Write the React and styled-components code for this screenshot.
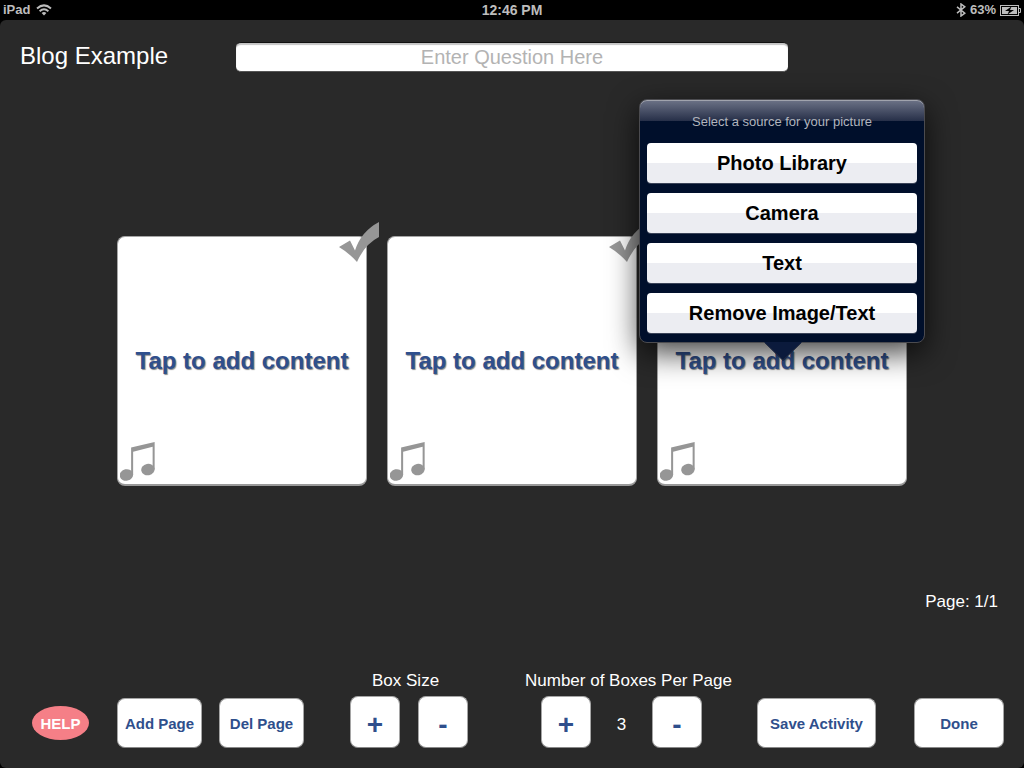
import { useState } from "react";
import styled, { createGlobalStyle } from "styled-components";

const SOURCES = ["Photo Library", "Camera", "Text", "Remove Image/Text"];

export default function App() {
  const [question, setQuestion] = useState("");
  const [count, setCount] = useState(3);
  const [size, setSize] = useState(250);

  const boxes = Array.from({ length: count }, (_, i) => i);

  return (
    <>
      <GlobalStyle />
      <Page>
        <StatusBar>
          <StatusGroup>
            <span>iPad</span>
            <WifiIcon />
          </StatusGroup>
          <Clock>12:46 PM</Clock>
          <StatusGroup $end>
            <BluetoothIcon />
            <span>63%</span>
            <BatteryIcon />
          </StatusGroup>
        </StatusBar>

        <Screen>
          <Header>
            <Title>Blog Example</Title>
            <Question
              aria-label="Question"
              placeholder="Enter Question Here"
              value={question}
              onChange={(e) => setQuestion(e.target.value)}
            />
          </Header>

          <Boxes>
            {boxes.map((i) => (
              <Box key={i} $size={size}>
                <BoxButton type="button">Tap to add content</BoxButton>
                <CheckIcon />
                <NoteIcon />
                {i === 2 && <SourcePopover />}
              </Box>
            ))}
          </Boxes>

          <PageNumber>Page: 1/1</PageNumber>

          <Footer>
            <Actions $gap={17}>
              <HelpButton type="button">HELP</HelpButton>
              <ActionButton type="button" $width={85}>
                Add Page
              </ActionButton>
              <ActionButton type="button" $width={85}>
                Del Page
              </ActionButton>
            </Actions>

            <Stepper>
              <StepperLabel $inset={22}>Box Size</StepperLabel>
              <StepperRow $width={118}>
                <StepButton type="button" onClick={() => setSize(size + 10)}>
                  +
                </StepButton>
                <StepButton type="button" onClick={() => setSize(size - 10)}>
                  -
                </StepButton>
              </StepperRow>
            </Stepper>

            <Stepper>
              <StepperLabel>Number of Boxes Per Page</StepperLabel>
              <StepperRow $width={161} $inset={16}>
                <StepButton type="button" onClick={() => setCount(count + 1)}>
                  +
                </StepButton>
                <Count>{count}</Count>
                <StepButton
                  type="button"
                  onClick={() => setCount(Math.max(1, count - 1))}
                >
                  -
                </StepButton>
              </StepperRow>
            </Stepper>

            <Actions $gap={38}>
              <ActionButton type="button" $width={119}>
                Save Activity
              </ActionButton>
              <ActionButton type="button" $width={90}>
                Done
              </ActionButton>
            </Actions>
          </Footer>
        </Screen>
      </Page>
    </>
  );
}

function SourcePopover() {
  return (
    <Popover>
      <PopoverTitle>Select a source for your picture</PopoverTitle>
      {SOURCES.map((s) => (
        <SourceButton type="button" key={s}>
          {s}
        </SourceButton>
      ))}
      <Arrow viewBox="0 0 38 19">
        <path d="M0 0H38L19 19Z" fill="#0b1a3c" />
        <path d="M1 1L19 18L37 1" fill="none" stroke="#20293f" />
      </Arrow>
    </Popover>
  );
}

function WifiIcon() {
  return (
    <svg width="16" height="12" viewBox="0 0 16 12" fill="none" stroke="#bdbdbd">
      <path d="M1 4.4Q8 -1.6 15 4.4" strokeWidth="2" />
      <path d="M3.6 7.2Q8 3.4 12.4 7.2" strokeWidth="1.9" />
      <path d="M5.6 9L8 11.6L10.4 9Q8 7.2 5.6 9Z" fill="#bdbdbd" stroke="none" />
    </svg>
  );
}

function BluetoothIcon() {
  return (
    <svg width="10" height="14" viewBox="0 0 10 14" fill="none" stroke="#bdbdbd" strokeWidth="1.5">
      <path d="M1 3.8L8.8 10.2L5 13V1L8.8 3.8L1 10.2" />
    </svg>
  );
}

function BatteryIcon() {
  return (
    <svg width="21" height="11" viewBox="0 0 21 11">
      <rect x="0.5" y="0.5" width="18" height="10" fill="none" stroke="#bdbdbd" />
      <rect x="2" y="2" width="15" height="7" fill="#bdbdbd" />
      <path d="M19 3.5H20.5V7.5H19" fill="none" stroke="#bdbdbd" />
      <path d="M11.5 1.5L5 6H9L7.5 9.5L14 5H10Z" fill="#000" />
    </svg>
  );
}

function CheckIcon() {
  return (
    <Check viewBox="0 0 40 40">
      <path
        d="M0 25L11 18.5L16 28.5Q22 9.5 40 0V15Q26 22 18 40Q10 31 0 25Z"
        fill="#969696"
      />
    </Check>
  );
}

function NoteIcon() {
  return (
    <Note viewBox="0 0 104 116" fill="#969696">
      <path d="M33 16L103 0V82H97V14L39 29V98H33Z" />
      <ellipse cx="19" cy="98" rx="20" ry="17" transform="rotate(-12 19 98)" />
      <ellipse cx="83" cy="82" rx="20" ry="17" transform="rotate(-12 83 82)" />
    </Note>
  );
}

const GlobalStyle = createGlobalStyle`
  * {
    box-sizing: border-box;
  }

  body {
    margin: 0;
    background: #000;
    font-family: "Liberation Sans", Arial, sans-serif;
  }

  button,
  input {
    font-family: inherit;
  }
`;

const Page = styled.div`
  display: flex;
  flex-direction: column;
  min-height: 100vh;
`;

const StatusBar = styled.div`
  display: grid;
  grid-template-columns: 1fr auto 1fr;
  align-items: center;
  height: 20px;
  padding: 0 3px;
  color: #bdbdbd;
  font-size: 13px;
  font-weight: bold;
`;

const StatusGroup = styled.div`
  display: flex;
  align-items: center;
  justify-content: ${(p) => (p.$end ? "flex-end" : "flex-start")};
  gap: ${(p) => (p.$end ? "4px" : "6px")};

  span {
    line-height: 16px;
  }
`;

const Clock = styled.div`
  font-size: 14px;
  line-height: 16px;
`;

const Screen = styled.main`
  display: flex;
  flex-direction: column;
  flex: 1;
  background: #292929;
  border-radius: 6px;
`;

const Header = styled.header`
  display: grid;
  grid-template-columns: 216px 1fr 216px;
  align-items: start;
  padding: 22px 20px 0;
`;

const Title = styled.h1`
  margin: 0;
  color: #fff;
  font-size: 24px;
  font-weight: normal;
  line-height: 28px;
`;

const Question = styled.input`
  width: 100%;
  height: 30px;
  padding: 0 8px;
  border: 1px solid #111;
  border-width: 1px 0;
  border-bottom-color: #555;
  border-radius: 5px;
  background: #fff;
  box-shadow: inset 0 2px 1px #c4c4c4;
  font-size: 20px;
  text-align: center;

  &::placeholder {
    color: #b3b3b3;
  }
`;

const Boxes = styled.div`
  display: flex;
  justify-content: center;
  gap: 20px;
  margin-top: 164px;
`;

const Box = styled.div`
  position: relative;
  width: ${(p) => p.$size}px;
  height: ${(p) => p.$size}px;
`;

const BoxButton = styled.button`
  width: 100%;
  height: 100%;
  padding: 0;
  border: 1px solid #a5a5a5;
  border-bottom: 2px solid #999;
  border-radius: 8px;
  background: #fff;
  color: #2f4f8c;
  font-size: 24px;
  font-weight: bold;
  text-shadow: 1px 1px 1px #888;
`;

const Check = styled.svg`
  position: absolute;
  top: -14px;
  right: -12px;
  width: 40px;
  height: 40px;
`;

const Note = styled.svg`
  position: absolute;
  left: 3px;
  bottom: 5px;
  width: 35px;
  height: 39px;
`;

const Popover = styled.div`
  position: absolute;
  z-index: 2;
  left: 50%;
  bottom: 143px;
  display: flex;
  flex-direction: column;
  gap: 10px;
  width: 286px;
  padding: 0 7px 9px;
  transform: translateX(-50%);
  border: 1px solid #4b4b4f;
  border-radius: 8px;
  background:
    linear-gradient(#6d7387, #262f48) top / 100% 21px no-repeat,
    #000f2b;
  box-shadow:
    inset 0 1px 0 #a0a3ad,
    0 10px 30px rgba(0, 0, 0, 0.75);
`;

const PopoverTitle = styled.div`
  height: 33px;
  padding-top: 14px;
  color: #b0b4bd;
  font-size: 13px;
  line-height: 16px;
  text-align: center;
`;

const SourceButton = styled.button`
  height: 40px;
  padding: 0;
  border: 0;
  border-radius: 4px;
  background: linear-gradient(#fff 50%, #ecedf2 50%);
  box-shadow: 0 1px 0 #3a4358;
  color: #000;
  font-size: 20px;
  font-weight: bold;
`;

const Arrow = styled.svg`
  position: absolute;
  top: 100%;
  left: 50%;
  width: 38px;
  height: 19px;
  margin-left: -18px;
`;

const PageNumber = styled.div`
  margin-top: 106px;
  padding-right: 26px;
  color: #fff;
  font-size: 17px;
  line-height: 20px;
  text-align: right;
`;

const Footer = styled.footer`
  display: grid;
  grid-template-columns: 318fr 175fr 232fr 247fr;
  align-items: end;
  justify-items: start;
  margin-top: auto;
  padding: 0 20px 20px 32px;
`;

const Actions = styled.div`
  display: flex;
  align-items: center;
  gap: ${(p) => p.$gap}px;
`;

const HelpButton = styled.button`
  width: 57px;
  height: 34px;
  margin-right: 11px;
  padding: 0;
  border: 0;
  border-radius: 50%;
  background: #f57f87;
  color: #fff;
  font-size: 15px;
  font-weight: bold;
`;

const ActionButton = styled.button`
  width: ${(p) => p.$width}px;
  height: 50px;
  padding: 0;
  border: 1px solid #a5a5a5;
  border-bottom-color: #888;
  border-radius: 8px;
  background: #fff;
  color: #2f4f8c;
  font-size: 15px;
  font-weight: bold;
`;

const Stepper = styled.div`
  display: flex;
  flex-direction: column;
  gap: 5px;
`;

const StepperLabel = styled.div`
  padding-left: ${(p) => p.$inset || 0}px;
  color: #fff;
  font-size: 17px;
  line-height: 20px;
`;

const StepperRow = styled.div`
  display: flex;
  align-items: center;
  justify-content: space-between;
  width: ${(p) => p.$width}px;
  margin-left: ${(p) => p.$inset || 0}px;
`;

const StepButton = styled(ActionButton)`
  width: 50px;
  height: 52px;
  padding-top: 6px;
  font-size: 28px;
`;

const Count = styled.span`
  padding-top: 6px;
  color: #fff;
  font-size: 17px;
`;
